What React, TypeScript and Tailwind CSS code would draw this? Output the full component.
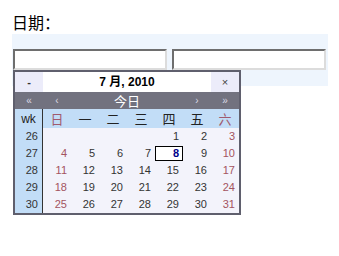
const weeks: { wk: number; days: (number | null)[] }[] = [
  { wk: 26, days: [null, null, null, null, 1, 2, 3] },
  { wk: 27, days: [4, 5, 6, 7, 8, 9, 10] },
  { wk: 28, days: [11, 12, 13, 14, 15, 16, 17] },
  { wk: 29, days: [18, 19, 20, 21, 22, 23, 24] },
  { wk: 30, days: [25, 26, 27, 28, 29, 30, 31] },
];

const dayNames = ['日', '一', '二', '三', '四', '五', '六'];

const cjk = "font-['Noto_Sans_CJK_SC',sans-serif]";

function Calendar() {
  return (
    <div className="absolute left-[1px] top-[36px] w-[228px] border-2 border-[#5f5f6d] bg-[#f3f3fb] font-['Liberation_Sans','Noto_Sans_CJK_SC',sans-serif] text-[11px] text-[#333]">
      {/* Title */}
      <div className="grid h-[20px] grid-cols-[28px_168px_28px] items-center">
        <div className="flex h-full items-center justify-center bg-[#ececfa] font-bold text-[#333]">-</div>
        <div className="flex h-full items-center justify-center bg-white text-[12px] font-bold text-black">
          7 月, 2010
        </div>
        <div className="flex h-full items-center justify-center bg-[#ececfa] text-[11px] text-[#444]">×</div>
      </div>

      {/* Nav row */}
      <div className="grid h-[17px] grid-cols-[28px_28px_112px_28px_28px] items-center bg-[#72727f] text-[#d8d8e4]">
        <div className="text-center text-[10px]">«</div>
        <div className="text-center text-[10px]">‹</div>
        <div className={`text-center text-[13px] leading-[17px] text-white ${cjk}`}>今日</div>
        <div className="text-center text-[10px]">›</div>
        <div className="text-center text-[10px]">»</div>
      </div>

      {/* Day names */}
      <div className="grid h-[19px] grid-cols-[28px_repeat(7,28px)] items-center bg-[#c2ddf7] text-[13px]">
        <div className="flex h-full items-center justify-center border-r border-[#333] text-[12px] text-[#222]">wk</div>
        {dayNames.map((d, i) => (
          <div
            key={d}
            className={`text-center leading-[19px] ${cjk} ${i === 0 || i === 6 ? 'text-[#a05a6e]' : 'text-[#222]'}`}
          >
            {d}
          </div>
        ))}
      </div>

      {/* Weeks */}
      {weeks.map((w) => (
        <div key={w.wk} className="grid h-[17px] grid-cols-[28px_repeat(7,28px)] items-center">
          <div className="flex h-full items-center justify-end border-r border-[#333] bg-[#c2ddf7] pr-[4px] text-[#333]">
            {w.wk}
          </div>
          {w.days.map((d, i) => {
            if (d === null) return <div key={i} />;
            if (d === 8) {
              return (
                <div
                  key={i}
                  className="flex h-[15px] items-center justify-end border border-black bg-white pr-[3px] font-bold text-[#00008b]"
                >
                  {d}
                </div>
              );
            }
            return (
              <div
                key={i}
                className={`pr-[4px] text-right ${i === 0 || i === 6 ? 'text-[#a35460]' : 'text-[#333]'}`}
              >
                {d}
              </div>
            );
          })}
        </div>
      ))}
    </div>
  );
}

export default function App() {
  return (
    <div className="min-h-[256px] bg-white pl-3 pt-[10px]">
      <div className={`h-[24px] text-[16px] leading-[24px] text-black ${cjk}`}>日期：</div>
      <div className="relative flex h-[52px] w-[316px] gap-[5px] bg-[#eef5fd] pl-[1px] pt-[15px]">
        <input className="h-[21px] w-[154px] border-2 border-b-[#dcdcdc] border-l-[#6e6e6e] border-r-[#dcdcdc] border-t-[#6e6e6e] bg-white outline-none" />
        <input className="h-[21px] w-[154px] border-2 border-b-[#dcdcdc] border-l-[#6e6e6e] border-r-[#dcdcdc] border-t-[#6e6e6e] bg-white outline-none" />
        <Calendar />
      </div>
    </div>
  );
}
